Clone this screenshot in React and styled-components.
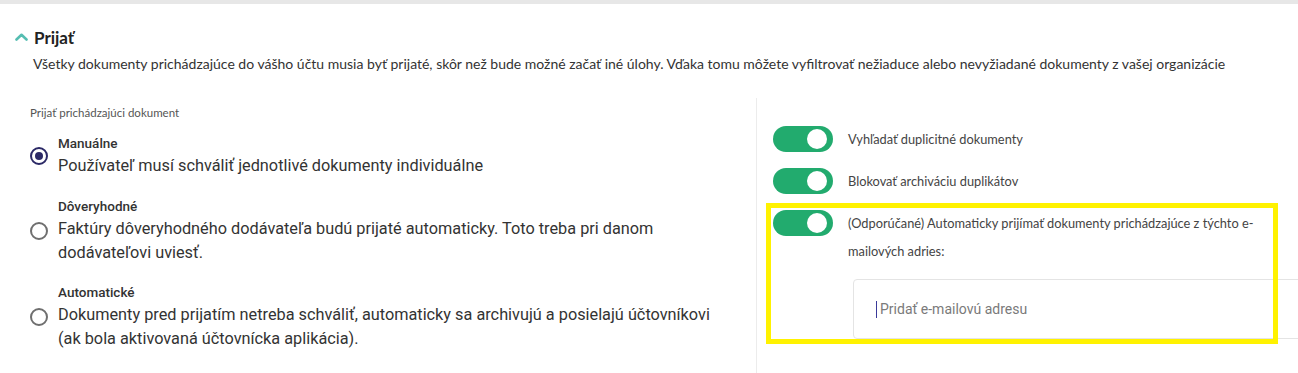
import React from "react";
import styled, { createGlobalStyle } from "styled-components";

const GlobalStyle = createGlobalStyle`
  html, body {
    margin: 0;
    padding: 0;
    background: #fff;
    overflow: hidden;
  }
  body {
    font-family: "Lato", "Noto Sans", sans-serif;
    color: #333;
  }
`;

const TopBar = styled.div`
  height: 4px;
  background-color: #e7e7e7;
`;

const Section = styled.section`
  padding: 24px 0 0 15px;
`;

const Header = styled.div`
  display: flex;
  align-items: center;
  gap: 6px;
  height: 20px;
`;

const Title = styled.h2`
  margin: 0;
  font-size: 17px;
  line-height: 20px;
  font-weight: 700;
  color: #222;
`;

const Description = styled.p`
  margin: 6px 0 0 18px;
  font-size: 14px;
  line-height: 20px;
  color: #333;
  white-space: nowrap;
`;

const Columns = styled.div`
  display: grid;
  grid-template-columns: 741px 1fr;
  margin-top: 24px;
  min-height: 290px;
`;

const LeftColumn = styled.div`
  padding: 7px 28px 0 15px;
`;

const GroupLabel = styled.div`
  font-size: 11.5px;
  line-height: 16px;
  color: #555;
  margin-bottom: 12px;
`;

const Option = styled.label`
  display: flex;
  align-items: center;
  gap: 10px;
  margin-bottom: ${(props) => props.gap || 18}px;
  font-family: "Roboto", "Liberation Sans", sans-serif;
  cursor: pointer;
`;

const Radio = styled.span`
  flex: 0 0 auto;
  width: 14px;
  height: 14px;
  border-radius: 50%;
  border: 2px solid ${(props) => (props.checked ? "#2b2966" : "#6f6f6f")};
  display: flex;
  align-items: center;
  justify-content: center;
  &::after {
    content: "";
    width: 8px;
    height: 8px;
    border-radius: 50%;
    background: ${(props) => (props.checked ? "#2b2966" : "transparent")};
  }
`;

const OptionText = styled.div`
  display: flex;
  flex-direction: column;
`;

const OptionTitle = styled.span`
  font-size: 13.5px;
  line-height: 20px;
  font-weight: 500;
  color: #333;
  margin-bottom: 1px;
`;

const OptionDesc = styled.span`
  font-size: 16.3px;
  line-height: 24px;
  color: #333;
`;

const RightColumn = styled.div`
  border-left: 1px solid #ececec;
  padding: 27px 0 0 16px;
  overflow: hidden;
`;

const SwitchRow = styled.div`
  display: flex;
  align-items: flex-start;
  gap: 15px;
  margin-bottom: 14px;
`;

const Switch = styled.span`
  flex: 0 0 auto;
  width: 60px;
  height: 26px;
  margin-top: 1px;
  border-radius: 13px;
  background-color: #22ab6e;
  display: flex;
  align-items: center;
  justify-content: flex-end;
  padding-right: 6px;
  box-sizing: border-box;
  &::after {
    content: "";
    width: 20px;
    height: 20px;
    border-radius: 50%;
    background: #fff;
  }
`;

const SwitchLabel = styled.span`
  font-size: 12.8px;
  line-height: 28px;
  color: #444;
  width: 420px;
`;

const Highlighted = styled.div`
  position: relative;
`;

const Marker = styled.div`
  position: absolute;
  left: -7px;
  top: -6px;
  bottom: -5px;
  width: 512px;
  border: 5px solid #fff200;
  box-sizing: border-box;
  pointer-events: none;
`;

const EmailField = styled.div`
  margin-left: 80px;
  width: 480px;
  height: 60px;
  box-sizing: border-box;
  border: 1px solid #e4e4e4;
  border-radius: 4px;
  display: flex;
  align-items: center;
  padding-left: 22px;
  font-family: "Roboto", "Liberation Sans", sans-serif;
  font-size: 14px;
  color: #7a7a7a;
`;

const Caret = styled.span`
  width: 1px;
  height: 17px;
  background: #3a3a9a;
  margin-right: 3px;
`;

const Chevron = () => (
  <svg width="13" height="8" viewBox="0 0 13 8" style={{ marginTop: "-2px" }}>
    <polyline
      points="1.5,6.5 6.5,1.8 11.5,6.5"
      fill="none"
      stroke="#55bdb1"
      strokeWidth="2.6"
      strokeLinecap="round"
      strokeLinejoin="round"
    />
  </svg>
);

const options = [
  {
    title: "Manuálne",
    desc: "Používateľ musí schváliť jednotlivé dokumenty individuálne",
    checked: true,
  },
  {
    title: "Dôveryhodné",
    desc: "Faktúry dôveryhodného dodávateľa budú prijaté automaticky. Toto treba pri danom dodávateľovi uviesť.",
    gap: 17,
  },
  {
    title: "Automatické",
    desc: "Dokumenty pred prijatím netreba schváliť, automaticky sa archivujú a posielajú účtovníkovi (ak bola aktivovaná účtovnícka aplikácia).",
  },
];

const App = () => {
  return (
    <>
      <GlobalStyle />
      <TopBar />
      <Section>
        <Header>
          <Chevron />
          <Title>Prijať</Title>
        </Header>
        <Description>
          Všetky dokumenty prichádzajúce do vášho účtu musia byť prijaté, skôr než bude možné začať iné úlohy. Vďaka tomu môžete vyfiltrovať nežiaduce alebo nevyžiadané dokumenty z vašej organizácie
        </Description>
        <Columns>
          <LeftColumn>
            <GroupLabel>Prijať prichádzajúci dokument</GroupLabel>
            {options.map((o) => (
              <Option key={o.title} gap={o.gap}>
                <Radio checked={o.checked} />
                <OptionText>
                  <OptionTitle>{o.title}</OptionTitle>
                  <OptionDesc>{o.desc}</OptionDesc>
                </OptionText>
              </Option>
            ))}
          </LeftColumn>
          <RightColumn>
            <SwitchRow>
              <Switch />
              <SwitchLabel>Vyhľadať duplicitné dokumenty</SwitchLabel>
            </SwitchRow>
            <SwitchRow>
              <Switch />
              <SwitchLabel>Blokovať archiváciu duplikátov</SwitchLabel>
            </SwitchRow>
            <Highlighted>
              <SwitchRow>
                <Switch />
                <SwitchLabel>
                  (Odporúčané) Automaticky prijímať dokumenty prichádzajúce z týchto e-mailových adries:
                </SwitchLabel>
              </SwitchRow>
              <EmailField>
                <Caret />
                Pridať e-mailovú adresu
              </EmailField>
              <Marker />
            </Highlighted>
          </RightColumn>
        </Columns>
      </Section>
    </>
  );
};

export default App;
